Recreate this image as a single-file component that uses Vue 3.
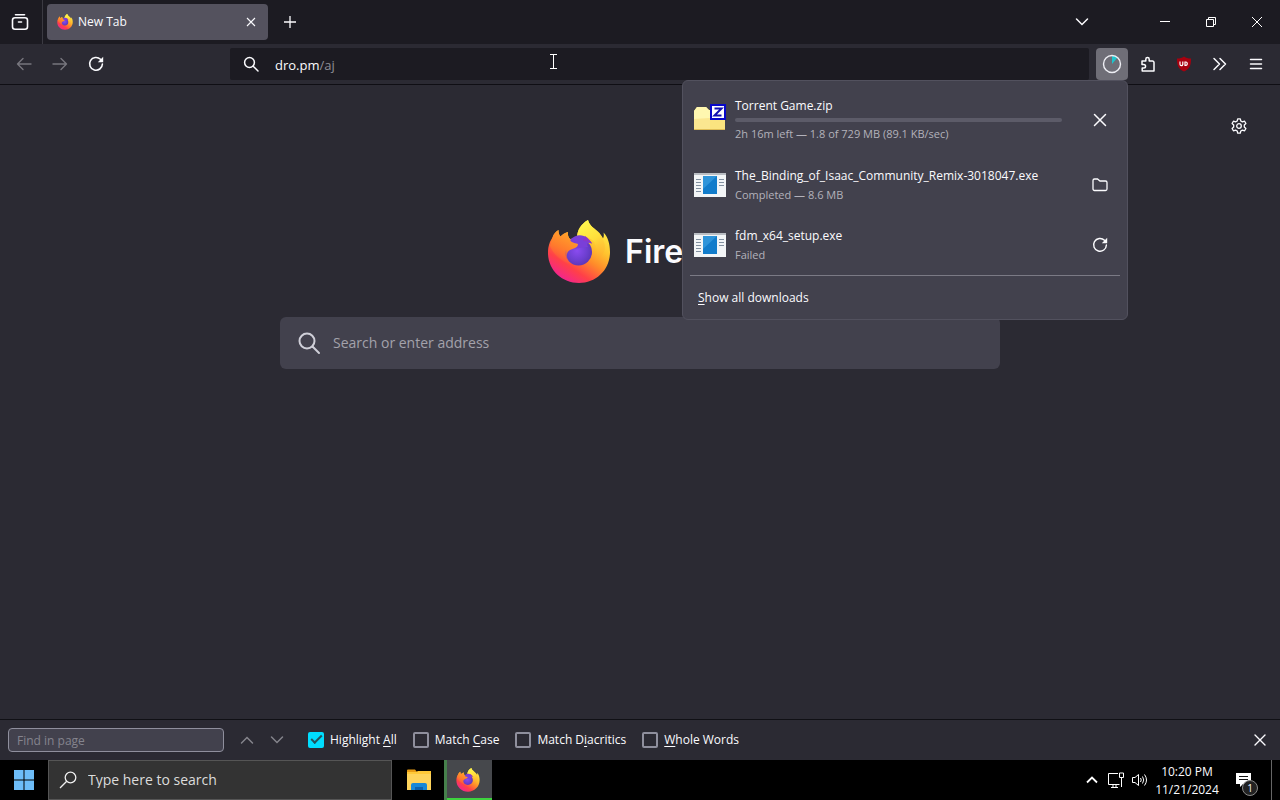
<template>
  <div class="screen">
    <!-- Shared logo symbol -->
    <svg class="defs" width="0" height="0" aria-hidden="true">
      <defs>
        <linearGradient id="ffBody" x1="0.85" y1="0.1" x2="0.25" y2="1">
          <stop offset="0" stop-color="#fff04a"/>
          <stop offset="0.3" stop-color="#ffc22e"/>
          <stop offset="0.52" stop-color="#ff8a2a"/>
          <stop offset="0.75" stop-color="#ff4048"/>
          <stop offset="1" stop-color="#f0209a"/>
        </linearGradient>
        <linearGradient id="ffFlame" x1="0.3" y1="0" x2="0.7" y2="1">
          <stop offset="0" stop-color="#fff84e"/>
          <stop offset="0.5" stop-color="#ffdd3a"/>
          <stop offset="1" stop-color="#ff9a30" stop-opacity="0"/>
        </linearGradient>
        <linearGradient id="ffHead" x1="0.6" y1="0" x2="0.2" y2="1">
          <stop offset="0" stop-color="#ffa72a"/>
          <stop offset="0.5" stop-color="#ff7e2c"/>
          <stop offset="1" stop-color="#ff5a36" stop-opacity="0"/>
        </linearGradient>
        <radialGradient id="ffGlobe" cx="0.45" cy="0.45" r="0.6">
          <stop offset="0" stop-color="#8a4bf0"/>
          <stop offset="0.6" stop-color="#6d3fd0"/>
          <stop offset="1" stop-color="#5a35b4"/>
        </radialGradient>
        <symbol id="firefox" viewBox="0 0 62 64">
          <path fill="url(#ffBody)" d="M40 0C41 6 47 8 51.500 13C53 15 54 16.500 55 18.500C56 16.500 56 14.500 55.500 12.500C60 17 62 24 62 32C62 50 48 63 31 63C14 63 0 50 0 33C0 26 2 21 4.500 17.500C5.500 14 8 11.500 10.500 10C10.500 13 11 15 12.500 16.500C14.500 14 17 13 20 12C19.500 14 20 17 22 19L29 18C29 10 33 4 40 0Z"/>
          <path fill="url(#ffFlame)" d="M40 0C33 4 29 10 29 19C35 15 42 17 46 22C50 29 50 36 46 43C54 38 59 31 56 22C54 12 42 9 40 0Z"/>
          <circle cx="30.500" cy="32" r="13.500" fill="url(#ffGlobe)"/>
          <path fill="#7a3fd8" d="M22 20C27 14 35 14 39 18L44 23C40 22 38 23 40 27L24 29Z"/>
          <path fill="#8a38c8" d="M37 16C40 18 43 21 44 24C41 22 38 21 35 21Z"/>
          <path fill="url(#ffHead)" d="M4.500 17.500C5.500 14 8 11.500 10.500 10C10.500 13 11 15 12.500 16.500C14.500 14 17 13 20 12C19.500 14 20 17 22 19C22 22 26 23 30 24C30 28 25 28.500 22 30C17 33 18 40 24 44C16 43 6 36 2 26Z"/>
        </symbol>
      </defs>
    </svg>

    <header class="tab-bar">
      <button class="archive-btn" aria-label="Firefox View">
        <svg width="18" height="18" viewBox="0 0 18 18" fill="none" stroke="#fbfbfe" stroke-width="1.6" stroke-linecap="round">
          <path d="M4.500 1.800H13.500"/>
          <rect x="1.500" y="4.800" width="15" height="11.500" rx="2.500"/>
          <path d="M7.500 9H10.500"/>
        </svg>
      </button>
      <div class="tab">
        <svg class="tab-logo"><use href="#firefox"/></svg>
        <span class="tab-title">New Tab</span>
        <button class="tab-close" aria-label="Close tab">
          <svg width="10" height="10" viewBox="0 0 10 10" stroke="#fbfbfe" stroke-width="1.100"><path d="M1 1L9 9M9 1L1 9"/></svg>
        </button>
      </div>
      <button class="new-tab" aria-label="New tab">
        <svg width="12" height="12" viewBox="0 0 12 12" stroke="#fbfbfe" stroke-width="1.300"><path d="M6 0V12M0 6H12"/></svg>
      </button>
      <div class="spacer"></div>
      <button class="list-tabs" aria-label="List all tabs">
        <svg width="14" height="14" viewBox="0 0 14 14" fill="none" stroke="#fbfbfe" stroke-width="1.500" stroke-linecap="round"><path d="M1.500 4L7 9.500L12.500 4"/></svg>
      </button>
      <div class="window-buttons">
        <button aria-label="Minimize">
          <svg width="10" height="10" viewBox="0 0 10 10"><rect y="4" width="10" height="1" fill="#fff"/></svg>
        </button>
        <button aria-label="Restore">
          <svg width="10" height="10" viewBox="0 0 10 10" fill="none" stroke="#fff"><path d="M.5 2.500H7.500V9.500H.5ZM2.500 2.500V.5H9.500V7.500H7.500"/></svg>
        </button>
        <button aria-label="Close">
          <svg width="10" height="10" viewBox="0 0 10 10" stroke="#fff"><path d="M0 0L10 10M10 0L0 10"/></svg>
        </button>
      </div>
    </header>

    <nav class="nav-bar">
      <button class="tool-btn" disabled aria-label="Back">
        <svg width="16" height="16" viewBox="0 0 16 16" fill="none" stroke="#77767e" stroke-width="1.400" stroke-linecap="round" stroke-linejoin="round"><path d="M15 8H1.500M7 2.500L1.500 8L7 13.500"/></svg>
      </button>
      <button class="tool-btn" disabled aria-label="Forward">
        <svg width="16" height="16" viewBox="0 0 16 16" fill="none" stroke="#77767e" stroke-width="1.400" stroke-linecap="round" stroke-linejoin="round"><path d="M1 8H14.500M9 2.500L14.500 8L9 13.500"/></svg>
      </button>
      <button class="tool-btn" aria-label="Reload">
        <svg width="16" height="16" viewBox="0 0 16 16"><path d="M12.500 3.300A6.400 6.400 0 1 0 14.400 8" fill="none" stroke="#fbfbfe" stroke-width="1.600" stroke-linecap="round"/><path d="M15.200 .8V6.200H9.800Z" fill="#fbfbfe"/></svg>
      </button>
      <label class="url-bar">
        <svg width="16" height="16" viewBox="0 0 16 16" fill="none" stroke="#fbfbfe" stroke-width="1.500" stroke-linecap="round"><circle cx="6.500" cy="6.500" r="4.900"/><path d="M10.200 10.200L15 15"/></svg>
        <span class="url-text"><input v-model="host" class="url-input" type="text" aria-label="Address"><span class="url-path">/aj</span></span>
        <svg class="cursor" width="9" height="17" viewBox="0 0 9 17" fill="none" stroke="#fff"><path d="M1 1.500H8M1 15.500H8M4.500 1.500V15.500"/></svg>
      </label>
      <div class="downloads">
        <button class="tool-btn active" aria-label="Downloads">
          <svg width="20" height="20" viewBox="0 0 20 20"><path d="M10 10V1.500A8.500 8.500 0 0 1 15.500 3.500Z" fill="#1fc4cc"/><circle cx="10" cy="10" r="8.500" fill="none" stroke="#eeeef4" stroke-width="1.400"/></svg>
        </button>
        <section class="panel">
          <ul class="download-list">
            <li v-for="d in downloads" :key="d.name" class="download" :class="{ running: d.progress !== undefined }">
              <svg v-if="d.kind === 'zip'" class="file-icon" viewBox="0 0 32 32">
                <path d="M0 9L3 5H12L15 8H31V28H0Z" fill="#ffef86"/>
                <path d="M0 9L3 5H12L15 8H16V28H0Z" fill="#fff7b0"/>
                <path d="M0 17L31 15V28H0Z" fill="#f8dc7c" opacity="0.600"/>
                <path d="M0 27.500H31" stroke="#dfbd55"/>
                <rect x="17" y="3" width="14" height="14" fill="#fff" stroke="#0808c8" stroke-width="2"/>
                <path d="M20.500 6.500H27.500L20.500 13.500H27.500" fill="none" stroke="#1010b0" stroke-width="2"/>
              </svg>
              <svg v-else class="file-icon" viewBox="0 0 32 32">
                <rect x="0" y="4" width="32" height="24" fill="#f3f5f7"/>
                <path d="M0 5H32" stroke="#b9bdc3" stroke-width="2"/>
                <path d="M2 10.500H7M2 13.500H7M2 16.500H7M2 19.500H7M2 22.500H7M25 10.500H30M25 13.500H30M25 16.500H30" stroke="#8290a0"/>
                <rect x="9" y="7" width="14" height="18" fill="#127ccb"/>
                <path d="M9 7H23L9 20Z" fill="#2e94da"/>
              </svg>
              <div class="download-text">
                <div class="download-name">{{ d.name }}</div>
                <div v-if="d.progress !== undefined" class="track"><div class="fill" :style="{ width: d.progress + '%' }"></div></div>
                <div class="download-status">{{ d.status }}</div>
              </div>
              <button class="download-action" :aria-label="d.action">
                <svg v-if="d.action === 'Cancel'" width="16" height="16" viewBox="0 0 16 16" stroke="#fbfbfe" stroke-width="1.500" stroke-linecap="round"><path d="M2.500 2.500L13.500 13.500M13.500 2.500L2.500 13.500"/></svg>
                <svg v-else-if="d.action === 'Open folder'" width="16" height="16" viewBox="0 0 16 16" fill="none" stroke="#fbfbfe" stroke-width="1.300"><path d="M1 3.500A1.500 1.500 0 0 1 2.500 2H5.500L8 4H13.500A1.500 1.500 0 0 1 15 5.500V12A1.500 1.500 0 0 1 13.500 13.500H2.500A1.500 1.500 0 0 1 1 12Z"/></svg>
                <svg v-else width="16" height="16" viewBox="0 0 16 16"><path d="M12.500 3.300A6.400 6.400 0 1 0 14.400 8" fill="none" stroke="#fbfbfe" stroke-width="1.400" stroke-linecap="round"/><path d="M15.200 .8V6.200H9.800Z" fill="#fbfbfe"/></svg>
              </button>
            </li>
          </ul>
          <button class="show-all"><span><u>S</u>how all downloads</span></button>
        </section>
      </div>
      <button class="tool-btn" aria-label="Extensions">
        <svg width="16" height="16" viewBox="0 0 16 16" fill="none" stroke="#fbfbfe" stroke-width="1.500" stroke-linejoin="round"><path d="M2 5H5.800V3.200A1.700 1.700 0 0 1 9.200 3.200V5H12.500A1.500 1.500 0 0 1 14 6.500V15H2.200V12H3.800A1.700 1.700 0 0 0 3.800 8.500H2Z"/></svg>
      </button>
      <button class="tool-btn" aria-label="uBlock Origin">
        <svg width="16" height="16" viewBox="0 0 16 16"><path d="M8 .5C10 2 12 2.500 15 2.500C15 9 14 13 8 15.500C2 13 1 9 1 2.500C4 2.500 6 2 8 .5Z" fill="#a8000f"/><path d="M4 5.500V8.300A1.300 1.300 0 0 0 6.800 8.300V5.500M9 6V9.300H10A1.700 1.700 0 0 0 10 6Z" fill="none" stroke="#fff" stroke-width="1.200"/></svg>
      </button>
      <button class="tool-btn" aria-label="More tools">
        <svg width="16" height="16" viewBox="0 0 16 16" fill="none" stroke="#fbfbfe" stroke-width="1.500" stroke-linecap="round" stroke-linejoin="round"><path d="M2 2.500L7.500 8L2 13.500M8 2.500L13.500 8L8 13.500"/></svg>
      </button>
      <button class="tool-btn" aria-label="Menu">
        <svg width="16" height="16" viewBox="0 0 16 16" stroke="#fbfbfe" stroke-width="1.500" stroke-linecap="round"><path d="M2.500 3.500H13.500M2.500 8H13.500M2.500 12.500H13.500"/></svg>
      </button>
    </nav>

    <main class="page">
      <button class="settings" aria-label="Personalize new tab">
        <svg width="16" height="16" viewBox="0 0 16 16" fill="none" stroke="#fbfbfe" stroke-width="1.300" stroke-linejoin="round">
          <path d="M6.700 .8H9.300L9.800 3L11.400 3.900L13.600 3.200L14.900 5.500L13.300 7V9L14.900 10.500L13.600 12.800L11.400 12.100L9.800 13L9.300 15.200H6.700L6.200 13L4.600 12.100L2.400 12.800L1.100 10.500L2.700 9V7L1.100 5.500L2.400 3.200L4.600 3.900L6.200 3Z"/>
          <circle cx="8" cy="8" r="2.300"/>
        </svg>
      </button>
      <div class="brand">
        <svg class="brand-logo"><use href="#firefox"/></svg>
        <span class="wordmark">Firefox</span>
      </div>
      <label class="search-box">
        <svg width="24" height="24" viewBox="0 0 24 24" fill="none" stroke="#cfcfd8" stroke-width="2" stroke-linecap="round"><circle cx="10" cy="10" r="7.500"/><path d="M15.500 15.500L22 22"/></svg>
        <input type="text" placeholder="Search or enter address" aria-label="Search or enter address">
      </label>
    </main>

    <div class="find-bar">
      <input class="find-input" type="text" placeholder="Find in page" aria-label="Find in page">
      <button class="find-step" aria-label="Previous">
        <svg width="14" height="14" viewBox="0 0 14 14" fill="none" stroke="#85848c" stroke-width="1.500" stroke-linecap="round"><path d="M1.500 10L7 4.500L12.500 10"/></svg>
      </button>
      <button class="find-step" aria-label="Next">
        <svg width="14" height="14" viewBox="0 0 14 14" fill="none" stroke="#85848c" stroke-width="1.500" stroke-linecap="round"><path d="M1.500 4L7 9.500L12.500 4"/></svg>
      </button>
      <div class="find-options">
        <label v-for="o in findOptions" :key="o.key" class="option">
          <input v-model="o.on" type="checkbox">
          <span>{{ o.before }}<u>{{ o.key }}</u>{{ o.after }}</span>
        </label>
      </div>
      <button class="find-close" aria-label="Close find bar">
        <svg width="12" height="12" viewBox="0 0 12 12" stroke="#fbfbfe" stroke-width="1.400" stroke-linecap="round"><path d="M1 1L11 11M11 1L1 11"/></svg>
      </button>
    </div>

    <footer class="taskbar">
      <button class="start" aria-label="Start">
        <svg width="20" height="20" viewBox="0 0 20 20" fill="#6dbdf8"><path d="M0 0H9.500V9.500H0ZM10.500 0H20V9.500H10.500ZM0 10.500H9.500V20H0ZM10.500 10.500H20V20H10.500Z"/></svg>
      </button>
      <label class="task-search">
        <svg width="18" height="18" viewBox="0 0 18 18" fill="none" stroke="#f0f0f0" stroke-width="1.300"><circle cx="11.500" cy="6.500" r="5.300"/><path d="M7.700 10.300L1 17"/></svg>
        <input type="text" placeholder="Type here to search" aria-label="Type here to search">
      </label>
      <button class="task-app" aria-label="File Explorer">
        <svg width="24" height="24" viewBox="0 0 24 24">
          <path d="M0 2.500A1 1 0 0 1 1 1.500H8L10 4H0Z" fill="#e89c14"/>
          <path d="M0 4H24V22H0Z" fill="#fed45c"/>
          <path d="M0 4H9L11 3H24V6H0Z" fill="#ffc938"/>
          <path d="M4 22V17A2 2 0 0 1 6 15H18A2 2 0 0 1 20 17V22Z" fill="#1688d8"/>
          <path d="M8 22V19H16V22Z" fill="#0b61ad"/>
        </svg>
      </button>
      <button class="task-app current" aria-label="Firefox">
        <svg class="task-logo"><use href="#firefox"/></svg>
      </button>
      <div class="spacer"></div>
      <button class="tray-btn" aria-label="Show hidden icons">
        <svg width="12" height="12" viewBox="0 0 12 12" fill="none" stroke="#fff" stroke-width="1.800"><path d="M1 8.500L6 3.500L11 8.500"/></svg>
      </button>
      <button class="tray-btn" aria-label="Network">
        <svg width="16" height="16" viewBox="0 0 16 16" fill="none" stroke="#fff"><path d="M10 1.500H.5V12.500H11.500M3 15.500H10M5 12.500V15.500M8 12.500V15.500M11.500 1H15.500V5.500H11.500ZM13.500 5.500V15"/></svg>
      </button>
      <button class="tray-btn" aria-label="Volume">
        <svg width="16" height="16" viewBox="0 0 16 16" fill="none" stroke="#fff"><path d="M.5 5.500H3L6.500 2.500V13.500L3 10.500H.5ZM8.500 6Q10 8 8.500 10M10.500 4.500Q13 8 10.500 11.500M12.500 2.500Q16.500 8 12.500 13.500"/></svg>
      </button>
      <div class="clock">
        <time>10:20 PM</time>
        <time>11/21/2024</time>
      </div>
      <button class="notify" aria-label="Notifications">
        <svg width="16" height="16" viewBox="0 0 16 16"><path d="M0 1H15V12H7L4 15V12H0Z" fill="#fff"/><path d="M3 4.500H12M3 7.500H12" stroke="#111"/></svg>
        <span class="badge">1</span>
      </button>
      <div class="show-desktop"></div>
    </footer>
  </div>
</template>

<script setup>
import { ref } from 'vue'

const host = ref('dro.pm')

const downloads = [
  { kind: 'zip', name: 'Torrent Game.zip', status: '2h 16m left — 1.8 of 729 MB (89.1 KB/sec)', progress: 0, action: 'Cancel' },
  { kind: 'exe', name: 'The_Binding_of_Isaac_Community_Remix-3018047.exe', status: 'Completed — 8.6 MB', action: 'Open folder' },
  { kind: 'exe', name: 'fdm_x64_setup.exe', status: 'Failed', action: 'Retry' },
]

const findOptions = ref([
  { before: 'Highlight ', key: 'A', after: 'll', on: true },
  { before: 'Match ', key: 'C', after: 'ase', on: false },
  { before: 'Match D', key: 'i', after: 'acritics', on: false },
  { before: '', key: 'W', after: 'hole Words', on: false },
])
</script>

<style>
body { background: #2b2a33; }
</style>

<style scoped>
.screen {
  display: flex; flex-direction: column; min-height: 100vh;
  background: #2b2a33; color: #fbfbfe;
  font-family: "Open Sans", "Noto Sans", sans-serif; font-size: 12px; line-height: 16px;
}
.screen *, .screen *::before { box-sizing: border-box; }
.defs { position: absolute; }
svg { display: block; flex: none; }
button {
  display: flex; align-items: center; justify-content: center; flex: none;
  padding: 0; border: 0; background: none; color: inherit; font: inherit;
}
input { font: inherit; color: inherit; }
u { text-underline-offset: 2px; }
.spacer { flex: 1; }

.tab-bar { display: flex; align-items: center; height: 44px; background: #1c1b22; }
.archive-btn { width: 43px; height: 44px; padding-right: 3px; border-right: 1px solid #3b3a42; }
.tab {
  display: flex; align-items: center; width: 221px; height: 36px; margin-left: 4px; padding: 0 8px 0 10px;
  border-radius: 4px; background: #54525e;
}
.tab-logo { width: 16px; height: 16px; }
.tab-title { flex: 1; margin-left: 5px; }
.tab-close { width: 18px; height: 24px; }
.new-tab { width: 36px; height: 36px; margin-left: 4px; }
.list-tabs { width: 36px; height: 36px; margin-right: 42px; }
.window-buttons { display: flex; }
.window-buttons button { width: 46px; height: 44px; }

.nav-bar {
  display: flex; align-items: center; gap: 4px; height: 41px; padding: 0 8px;
  background: #2b2a33; border-bottom: 1px solid #0f0e14;
}
.tool-btn { width: 32px; height: 32px; border-radius: 4px; }
.tool-btn.active { background: #6f6e77; }
.url-bar {
  position: relative; display: flex; align-items: center; flex: 1; height: 32px;
  margin: 0 3px 0 114px; padding: 0 13px; background: #1c1b22; border-radius: 2px;
}
.url-text { display: flex; margin-left: 16px; padding-top: 2px; font-size: 13px; line-height: 20px; }
.url-input { field-sizing: content; padding: 0; border: 0; outline: 0; background: none; line-height: 20px; }
.url-path { color: #8f8e96; }
.cursor { position: absolute; left: 319px; top: 5px; }

.downloads { position: relative; }
.panel {
  position: absolute; top: 100%; right: 0; z-index: 2; width: 446px; padding: 4px 7px 0;
  background: #42414d; border: 1px solid #52515e; border-radius: 6px;
}
.download-list { margin: 0; padding: 0; list-style: none; border-bottom: 1px solid #7b7a85; }
.download { display: flex; align-items: center; height: 60px; padding: 0 4px; }
.download.running { height: 70px; }
.file-icon { width: 32px; height: 32px; }
.download.running .file-icon { margin-bottom: 4px; }
.download-text { display: flex; flex-direction: column; gap: 3px; width: 327px; margin-left: 9px; }
.running .download-text { gap: 4px; }
.download-name, .download-status { white-space: nowrap; }
.download-status { color: #b3b2bb; font-size: 11px; }
.track { height: 4px; border-radius: 2px; background: #5c5b68; }
.fill { height: 4px; border-radius: 2px; background: #00ddff; }
.download-action { width: 32px; height: 32px; margin-left: auto; }
.show-all { justify-content: flex-start; width: 100%; height: 43px; padding-left: 8px; }

.page { position: relative; display: flex; flex-direction: column; align-items: center; flex: 1; padding-top: 134px; }
.settings { position: absolute; top: 25px; right: 25px; width: 32px; height: 32px; }
.brand { display: flex; align-items: center; height: 66px; gap: 15px; }
.brand-logo { width: 62px; height: 64px; }
.wordmark { font-family: Inter, sans-serif; font-size: 32px; font-weight: 600; line-height: 40px; }
.search-box {
  display: flex; align-items: center; width: 720px; max-width: 90%; height: 52px; margin-top: 32px; padding: 0 17px;
  border-radius: 6px; background: #42414d;
}
.search-box input { flex: 1; margin-left: 12px; padding: 0; border: 0; outline: 0; background: none; font-size: 14px; }
.search-box input::placeholder { color: #a3a2ab; }

.find-bar {
  display: flex; align-items: center; height: 41px; padding: 0 8px;
  background: #2b2a33; border-top: 1px solid #101015;
}
.find-input {
  width: 216px; height: 24px; padding: 0 8px; border: 1px solid #8f8f9d; border-radius: 4px; outline: 0; background: #42414d;
}
.find-input::placeholder { color: #85848e; }
.find-step { width: 30px; height: 24px; }
.find-input + .find-step { margin-left: 8px; }
.find-options { display: flex; gap: 16px; margin-left: 16px; }
.option { display: flex; align-items: center; gap: 6px; }
.option input {
  appearance: none; display: flex; align-items: center; justify-content: center; width: 16px; height: 16px; margin: 0;
  border: 2px solid #8f8f9d; border-radius: 2px;
}
.option input:checked { border-color: #00ddff; background: #00ddff; }
.option input:checked::before {
  content: ""; width: 11px; height: 6px; margin-bottom: 4px;
  border-left: 2px solid #23525c; border-bottom: 2px solid #23525c; transform: rotate(-45deg);
}
.find-close { width: 24px; height: 24px; margin-left: auto; }

.taskbar { display: flex; align-items: stretch; height: 40px; background: #000; }
.start { width: 48px; }
.task-search {
  display: flex; align-items: center; width: 344px; padding: 0 10px; background: #333; border: 1px solid #555;
}
.task-search input { flex: 1; min-width: 0; margin-left: 11px; padding: 0; border: 0; outline: 0; background: none; font-size: 14px; }
.task-search input::placeholder { color: #dcdcdc; }
.task-app { width: 48px; margin-left: 3px; }
.task-app.current { margin-left: 1px; background: #46484c; box-shadow: inset 3px 0 #46804c, inset 0 -2px #3ed33e; }
.task-logo { width: 24px; height: 24px; }
.tray-btn { width: 24px; }
.clock { display: flex; flex-direction: column; justify-content: center; width: 70px; padding-top: 2px; text-align: center; line-height: 18px; }
.notify { position: relative; width: 43px; }
.badge {
  position: absolute; left: 20px; bottom: 4px; width: 16px; height: 16px;
  border: 1px solid #8a8a8a; border-radius: 50%; background: #222; font-size: 10px; line-height: 14px; text-align: center;
}
.show-desktop { width: 9px; margin-left: 6px; border-left: 1px solid #666; }
</style>
